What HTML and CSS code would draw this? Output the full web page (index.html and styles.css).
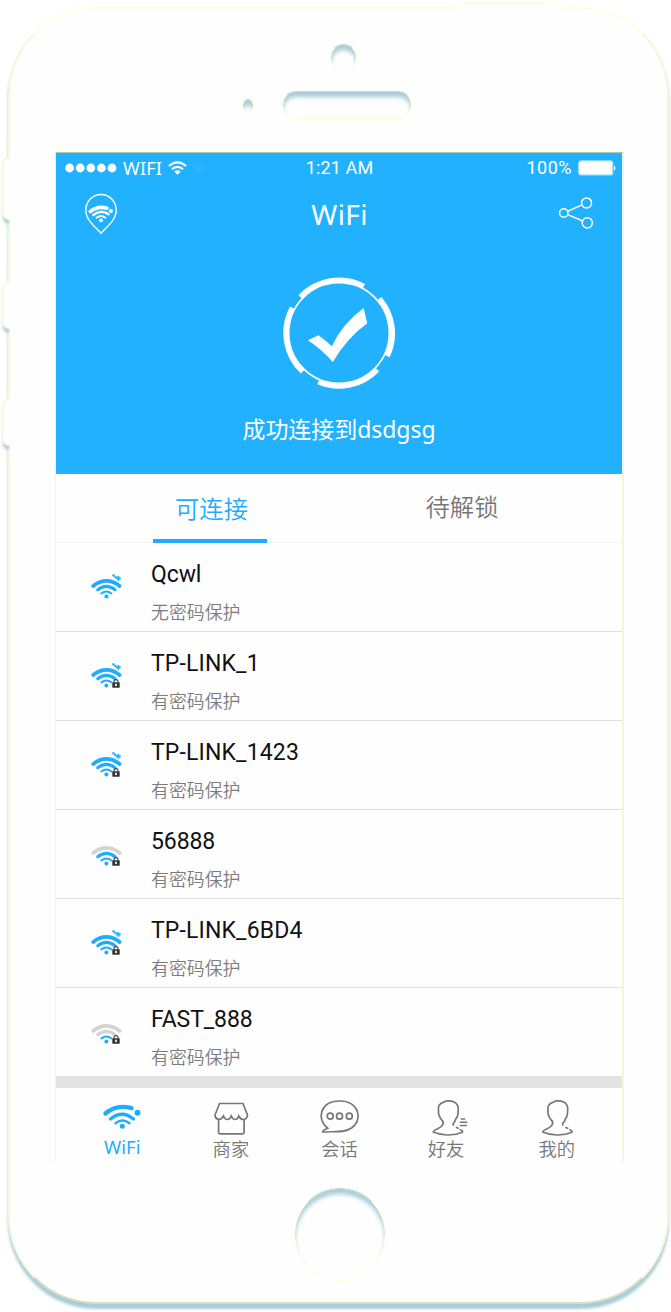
FILE: index.html
```html
<!DOCTYPE html>
<html lang="zh-CN">
<head>
<meta charset="utf-8">
<title>WiFi</title>
<link rel="stylesheet" href="styles.css">
</head>
<body>
<svg class="defs" width="0" height="0" aria-hidden="true">
  <symbol id="lock" viewBox="0 0 8 9"><path d="M2 4V2.6a2 2 0 0 1 4 0V4" fill="none" stroke="#444" stroke-width="1.1"/><rect x=".3" y="3.3" width="7.4" height="5.4" rx=".4" fill="#333"/><rect x="3" y="4.7" width="2" height="2.4" fill="#ddd"/></symbol>
  <symbol id="wifi" viewBox="0 0 32 26">
    <g fill="none" stroke-linecap="round">
      <path class="arc-outer" d="M3.2 11.9Q16.4 1.8 29.6 11.9" stroke-width="3.8"/>
      <path class="arc-mid" d="M7.7 15.8Q16.4 9 25.1 15.8" stroke-width="3"/>
      <path class="arc-inner" d="M11.3 19.5Q16.4 15.5 21.5 19.5" stroke-width="2"/>
    </g>
    <circle cx="16.4" cy="22.4" r="2" fill="#1eacff"/>
  </symbol>
  <symbol id="spark" viewBox="0 0 9 7"><path d="M.3 1.400h2.400M1.500.2v2.400M2.400 3.100h2M3.600 1.800v2.400M4 4.300h4.800M6.400 1.900v4.800" fill="none" stroke="#1eacff" stroke-width="1.800"/></symbol>
</svg>
<div class="phone">
  <i class="key power"></i><i class="key mute"></i><i class="key up"></i><i class="key down"></i>
  <div class="top">
    <i class="hole camera"></i>
    <div class="ear"><i class="hole sensor"></i><i class="hole speaker"></i></div>
  </div>
  <main class="screen">
    <header class="hero">
      <div class="status">
        <div class="carrier">
          <svg width="52" height="10" viewBox="0 0 52 10" fill="#fff"><circle cx="4.6" cy="5" r="4.4"/><circle cx="15.2" cy="5" r="4.4"/><circle cx="25.8" cy="5" r="4.4"/><circle cx="36.4" cy="5" r="4.4"/><circle cx="47" cy="5" r="4.4"/></svg>
          <span class="net">WIFI</span>
          <svg width="19" height="14" viewBox="0 0 19 14" fill="none" stroke="#fff" stroke-width="2.200"><path d="M1 5Q9.5-2.4 18 5M4 8.2q5.500-4.600 11 0"/><path d="M6.200 10.500q3.300-2.400 6.600 0l-3.300 3.300z" fill="#fff" stroke="none"/></svg>
          <svg class="ghost" width="12" height="9" viewBox="0 0 19 14" fill="none" stroke="#fff" stroke-width="2"><path d="M1 5Q9.5-2.4 18 5M4 8.2q5.500-4.600 11 0"/><path d="M6.500 10.500q3-2 6 0l-3 3z" fill="#fff" stroke="none"/></svg>
        </div>
        <span class="time">1:21 AM</span>
        <div class="power-level"><span>100%</span>
          <svg width="38" height="16" viewBox="0 0 38 16"><rect x=".7" y=".9" width="34" height="14" rx="2.500" fill="#fff" stroke="#a9e0ff" stroke-width="1.400"/><path d="M36 5.500q1.400.5 1.400 2.500t-1.400 2.500z" fill="#fff"/></svg>
        </div>
      </div>
      <div class="nav">
        <svg width="34" height="42" viewBox="0 0 34 42"><path d="M17 40.300C12.500 35 1.800 27.500 1.800 17.200a15.200 15.700 0 0 1 30.400 0C32.200 27.500 21.500 35 17 40.300z" fill="none" stroke="#fff" stroke-width="1.400"/><g fill="none" stroke="#fff" stroke-linecap="round"><path d="M6.300 18.500Q14 12.300 23 15.300" stroke-width="3.600"/><path d="M9.300 22Q17 15.800 24.500 21.300" stroke-width="2.400"/><path d="M12.500 24.800q4.500-3.500 9 0" stroke-width="1.800"/></g><circle cx="26.800" cy="18" r="2.100" fill="#fff"/><circle cx="17" cy="27.300" r="1.900" fill="#fff"/></svg>
        <h1>WiFi</h1>
        <svg width="36" height="34" viewBox="0 0 36 34" fill="none" stroke="#fff" stroke-width="1.500"><circle cx="5.800" cy="16" r="4.200"/><circle cx="28.600" cy="5.900" r="5"/><circle cx="29.300" cy="25.800" r="5.100"/><path d="M9.700 14.200l14.300-6.300M9.700 17.600l14.600 6.100"/></svg>
      </div>
      <svg class="done" width="112" height="112" viewBox="0 0 114 114">
        <g fill="none" stroke="#fff"><circle cx="57" cy="57" r="51.200" stroke-width="1.700"/>
        <path d="M17.600 20.300A54 54 0 0 1 82.300 9.400M98.100 22A54 54 0 0 1 106.100 80.500M96 94.200A54 54 0 0 1 35.900 106.700M20 96.300A54 54 0 0 1 9.500 31.400" stroke-width="5.400"/></g>
        <path d="M25.300 64.300L36 59.200Q43 64 49.700 70.500Q60 48 82 31.500L85.800 47Q65 62 50.700 86.500Q40 74 25.300 64.300z" fill="#fff"/>
      </svg>
      <p class="joined">成功连接到dsdgsg</p>
    </header>
    <div class="tabs"><div class="tab on"><span>可连接</span></div><div class="tab"><span>待解锁</span></div></div>
    <ul class="list">
      <li><div class="signal s3"><svg width="32" height="26"><use href="#wifi"/></svg><svg class="spark" width="9" height="7"><use href="#spark"/></svg></div><div><b class="plain">Qcwl</b><p>无密码保护</p></div></li>
      <li><div class="signal s3"><svg width="32" height="26"><use href="#wifi"/></svg><svg class="spark" width="9" height="7"><use href="#spark"/></svg><svg class="lock" width="8" height="9"><use href="#lock"/></svg></div><div><b>TP-LINK_1</b><p>有密码保护</p></div></li>
      <li><div class="signal s3"><svg width="32" height="26"><use href="#wifi"/></svg><svg class="spark" width="9" height="7"><use href="#spark"/></svg><svg class="lock" width="8" height="9"><use href="#lock"/></svg></div><div><b>TP-LINK_1423</b><p>有密码保护</p></div></li>
      <li><div class="signal s2"><svg width="32" height="26"><use href="#wifi"/></svg><svg class="lock" width="8" height="9"><use href="#lock"/></svg></div><div><b class="plain">56888</b><p>有密码保护</p></div></li>
      <li><div class="signal s3"><svg width="32" height="26"><use href="#wifi"/></svg><svg class="spark" width="9" height="7"><use href="#spark"/></svg><svg class="lock" width="8" height="9"><use href="#lock"/></svg></div><div><b>TP-LINK_6BD4</b><p>有密码保护</p></div></li>
      <li><div class="signal s1"><svg width="32" height="26"><use href="#wifi"/></svg><svg class="lock" width="8" height="9"><use href="#lock"/></svg></div><div><b class="plain">FAST_888</b><p>有密码保护</p></div></li>
    </ul>
    <nav class="bar">
      <a class="on"><svg width="40" height="36" viewBox="0 0 40 36"><g stroke-linecap="round"><path d="M3.500 14.500Q14.500 5 29.500 9.200" stroke-width="4.400"/><path d="M8.500 20Q20 10.500 31.500 20" stroke-width="3.400"/><path d="M13.500 24.200q7-5.500 14 0" stroke-width="2.400"/></g><circle class="dot" cx="35.500" cy="13.800" r="3"/><circle class="dot" cx="20.300" cy="27.300" r="2.500"/></svg><span class="latin">WiFi</span></a>
      <a><svg width="40" height="36" viewBox="0 0 40 36"><path d="M8.500 4.500h23.500l4.500 11.700q-.5 3.800-3.800 4.300-3 .2-5-3.500-1 3.500-3.500 3.500t-4-3.500q-1.200 3.500-3.800 3.500t-3.900-3.500q-2 3.800-5 3.300-3.200-.5-3.600-4zM7.600 20.500v13q0 1.300 1.300 1.300h22.900q1.300 0 1.300-1.300v-13"/></svg><span>商家</span></a>
      <a><svg width="40" height="36" viewBox="0 0 40 36"><path d="M8.700 29.300C-3 20.500 1 2 20.500 2S44.500 20.500 32.500 29C25 34.500 14 32 3.700 33q-.5-1.200 5-3.700z"/><circle cx="11.200" cy="17.200" r="3"/><circle cx="20.500" cy="17.200" r="3"/><circle cx="30.300" cy="17.200" r="3"/></svg><span>会话</span></a>
      <a class="friends"><svg width="40" height="36" viewBox="-2.500 0 40 36"><path d="M14.300 25.700Q15.500 22.500 13 20.700 11.300 19.300 11 16.900 9.800 16 10 12.300 9.600 8.500 10.500 6.500 12.300 3.600 15.500 3.200 16.500 1.900 18.500 1.900q4.500-.3 7.200 1.200 3.800 2 4 6.400 0 3.500-.5 6.700-.4 2.300-1.800 3.500-.7 3-2.700 4.600-.4 1.300.6 2.300M14.300 25.700Q13.200 28 9.200 29.700 5 31.300 4.800 33 12 36.200 19.800 36q8-.2 14.200-2.800.8-1.400-2.800-2.700M27.300 28.200l3 1.300"/><path d="M32.200 20h4.500M31.300 23.300h7.500M31.300 26.500h7" stroke-width="1.400"/></svg><span>好友</span></a>
      <a><svg width="40" height="36" viewBox="-1 0 40 36"><path d="M14.300 25.700Q15.500 22.500 13 20.700 11.300 19.300 11 16.900 9.800 16 10 12.300 9.600 8.500 10.500 6.500 12.300 3.600 15.500 3.200 16.500 1.900 18.500 1.900q4.500-.3 7.200 1.200 3.800 2 4 6.400 0 3.500-.5 6.700-.4 2.300-1.800 3.500-.7 3-2.700 4.600-.4 1.300.6 2.300M14.300 25.700Q13.200 28 9.200 29.700 5 31.300 4.800 33 12 36.200 19.800 36q8-.2 14.200-2.800.8-1.400-2.800-2.700M27.300 28.200l3 1.300"/></svg><span>我的</span></a>
    </nav>
  </main>
  <i class="hole home"></i>
</div>
</body>
</html>
```
FILE: styles.css
```css
* { box-sizing: border-box; margin: 0; padding: 0; }
body { width: 671px; height: 1312px; padding: 7px 2px 0 8px; background: #fff; overflow: hidden; font-family: "Noto Sans", "Noto Sans CJK SC", sans-serif; }
.defs { display: block; position: absolute; }
.phone { position: relative; height: 1297px; border: 2px solid #f3f8dc; border-top-color: #ffffdf; border-bottom-color: #d3e0c5; border-radius: 88px; background: #fefefe; box-shadow: 0 5px 3px #a9cbd8; padding: 0 43px 0 45px; }
.key { position: absolute; left: -8px; width: 8px; border: 2px solid #f8fae0; border-right: 0; border-radius: 7px 0 0 7px; background: #fefefe; box-shadow: 0 5px 3px -1px #a9cbd8; clip-path: inset(0 0 -9px -2px); }
.mute { top: 148px; height: 63px; }
.up { top: 272px; height: 48px; }
.down { top: 389px; height: 48px; }
.power { left: 445px; top: -7px; width: 108px; height: 7px; border: 2px solid #ffffdf; border-bottom: 0; border-radius: 8px 8px 0 0; box-shadow: none; }
.top { height: 143px; padding-top: 35px; }
.hole { display: block; border: 1.5px solid #ffffd6; border-top-color: #c3d9c6; background: #fefefe; box-shadow: inset 0 5px 4px #a9cbd8; border-radius: 50%; }
.camera { width: 27px; height: 28px; margin-left: 275px; }
.ear { display: flex; align-items: center; padding: 19px 0 0 187px; }
.sensor { width: 12px; height: 13px; }
.speaker { width: 130px; height: 28px; border-radius: 14px; margin-left: 28px; }
.home { width: 92px; height: 93px; margin: 26px 0 0 238.500px; }
.screen { display: block; height: 1010px; border: solid #f3f6dc; border-width: 1px 2px 0 1px; border-top-color: #a9cba9; }
.hero { height: 321px; background: #22b1ff; color: #fff; }
.status { height: 30px; padding: 0 6px 0 9px; display: grid; grid-template-columns: 1fr auto 1fr; align-items: center; font: 18px/30px Roboto, sans-serif; letter-spacing: .15px; }
.time { margin-left: -2px; }
.carrier { display: flex; align-items: center; gap: 6px; }
.net { font: 18px/30px "Noto Sans", sans-serif; }
.ghost { opacity: .1; }
.power-level { display: flex; align-items: center; justify-content: flex-end; gap: 6px; letter-spacing: .5px; }
.nav { display: flex; justify-content: space-between; align-items: center; height: 62px; padding: 0 28px; }
.nav h1 { font: 400 28px/40px "Noto Sans", sans-serif; letter-spacing: .4px; padding-left: 3px; }
.done { display: block; margin: 32px auto 0; }
.joined { text-align: center; font-size: 23px; line-height: 32px; margin-top: 24px; letter-spacing: -.05px; }
.tabs { display: grid; grid-template-columns: 308px 1fr; height: 69px; border-bottom: 1px solid #f5f5f5; color: #777; font: 350 24.300px/64px "Noto Sans CJK SC", sans-serif; }
.tab { display: flex; justify-content: center; }
.tab.on { padding-top: 2px; }
.tab.on span { width: 114px; height: 67px; text-align: center; padding-left: 3px; color: #1eacff; border-bottom: 4px solid #1eacff; }
.tab + .tab { padding-right: 62px; }
.list { list-style: none; }
.list li { height: 89px; border-bottom: 1px solid #dedede; display: flex; padding: 14px 34px 0; }
.list b { display: block; font: 400 23px/32px Roboto, sans-serif; color: #111; padding-top: 2px; letter-spacing: .15px; }
.list .plain { letter-spacing: -.1px; }
.list p { font: 350 17.900px/26px "Noto Sans CJK SC", sans-serif; color: #7c7c7c; margin-top: 7px; }
.signal { position: relative; width: 61px; padding-top: 17px; }
.spark { position: absolute; left: 22px; top: 17px; }
.lock { position: absolute; left: 21.500px; top: 33px; }
.s3 { --o: #1eacff; --m: #1eacff; }
.s2 { --o: #d3d3d3; --m: #1eacff; }
.s1 { --o: #d3d3d3; --m: #d3d3d3; }
.arc-outer { stroke: var(--o); }
.arc-mid { stroke: var(--m); }
.arc-inner { stroke: #1eacff; }
.bar { margin-top: -1px; border-top: 12px solid #e4e4e4; padding: 11px 11px 0 12px; display: grid; grid-template-columns: repeat(5, 1fr); color: #777; font: 350 18.300px/26px "Noto Sans CJK SC", sans-serif; }
.bar a { display: flex; flex-direction: column; align-items: center; }
.bar svg { display: block; overflow: visible; fill: none; stroke: #777; stroke-width: 1.700; }
.bar .on { color: #1eacff; }
.bar .on svg { stroke: #1eacff; }
.bar .dot { fill: #1eacff; stroke: none; }
.bar .friends { padding-right: 4px; }
.latin { font: 18.500px/24px "Noto Sans", sans-serif; }
```
